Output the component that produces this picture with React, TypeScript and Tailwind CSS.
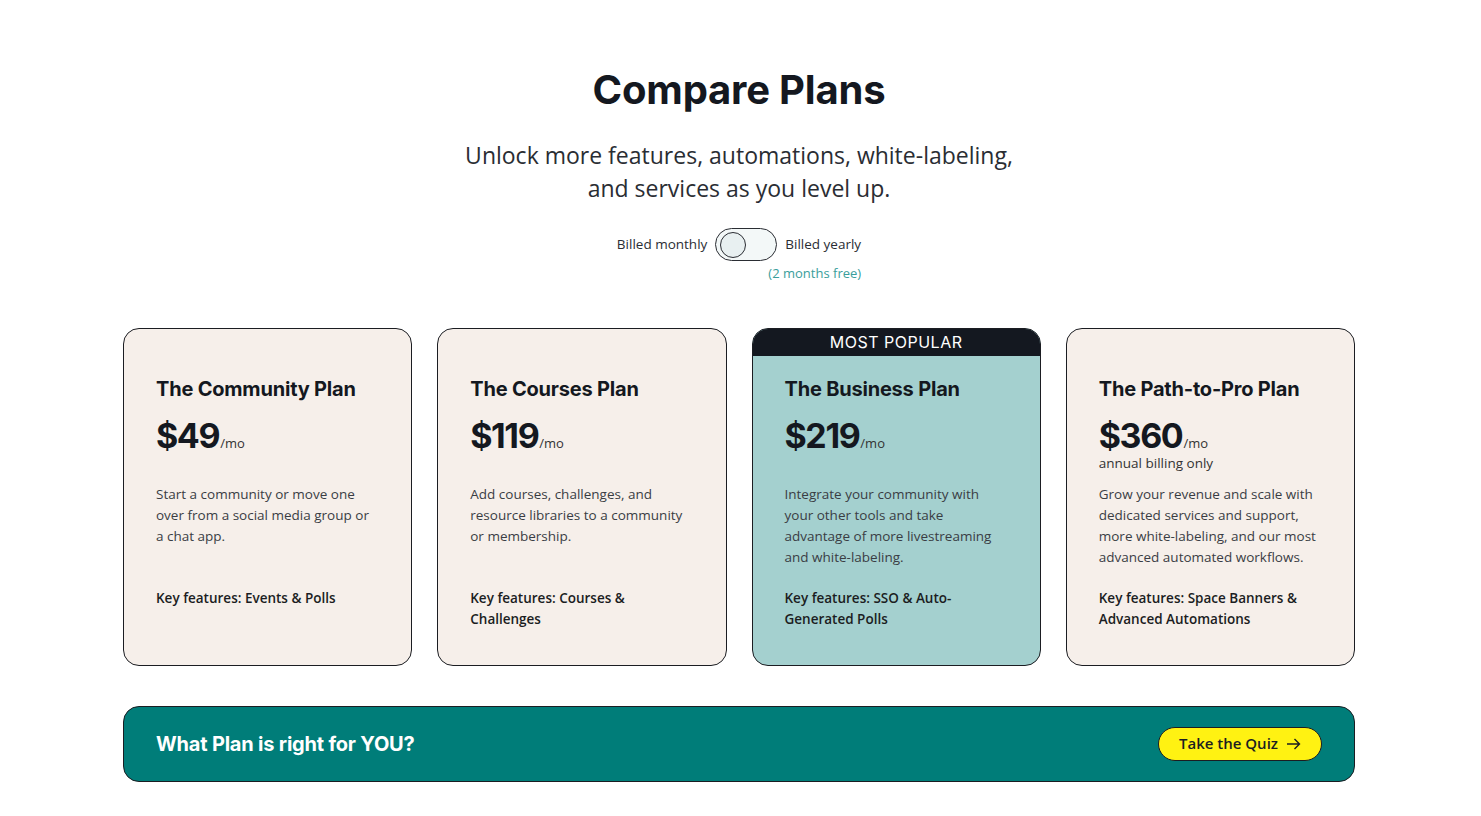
import React from "react";

const head = { fontFamily: "Inter, 'Noto Sans', sans-serif" };
const body = { fontFamily: "'Open Sans', 'Noto Sans', sans-serif" };

type Plan = {
  name: string;
  price: string;
  note?: string;
  desc: string[];
  key: string[];
  popular?: boolean;
};

const plans: Plan[] = [
  {
    name: "The Community Plan",
    price: "$49",
    desc: ["Start a community or move one", "over from a social media group or", "a chat app."],
    key: ["Key features: Events & Polls"],
  },
  {
    name: "The Courses Plan",
    price: "$119",
    desc: ["Add courses, challenges, and", "resource libraries to a community", "or membership."],
    key: ["Key features: Courses &", "Challenges"],
  },
  {
    name: "The Business Plan",
    price: "$219",
    desc: ["Integrate your community with", "your other tools and take", "advantage of more livestreaming", "and white-labeling."],
    key: ["Key features: SSO & Auto-", "Generated Polls"],
    popular: true,
  },
  {
    name: "The Path-to-Pro Plan",
    price: "$360",
    note: "annual billing only",
    desc: ["Grow your revenue and scale with", "dedicated services and support,", "more white-labeling, and our most", "advanced automated workflows."],
    key: ["Key features: Space Banners &", "Advanced Automations"],
  },
];

function Card({ p }: { p: Plan }) {
  return (
    <div
      className={`flex flex-col overflow-hidden rounded-[16px] border border-[#1b1d22] ${
        p.popular ? "bg-[#a4d0cf]" : "bg-[#f6efea]"
      }`}
    >
      {p.popular ? (
        <div
          className="flex h-[27px] items-center justify-center bg-[#141820] text-[16px] tracking-[0.5px] text-white"
          style={head}
        >
          <span className="font-normal">MOST POPULAR</span>
        </div>
      ) : null}
      <div className={`flex flex-col px-[32px] pb-[35px] ${p.popular ? "pt-[19px]" : "pt-[46px]"}`}>
        <div className="text-[20px] font-bold leading-[28px] tracking-[-0.2px] text-[#141820]" style={head}>
          {p.name}
        </div>
        <div className="mt-[15px] h-[66px]">
          <div className="flex items-baseline text-[#141820]">
            <span className="text-[34px] font-bold leading-[36px] tracking-[-1.4px]" style={head}>
              {p.price}
            </span>
            <span className="ml-[1px] text-[13px] leading-[18px] text-[#333]" style={body}>
              /mo
            </span>
          </div>
          {p.note ? (
            <div className="text-[13.5px] leading-[18px] text-[#333]" style={body}>
              {p.note}
            </div>
          ) : null}
        </div>
        <div className="h-[84px] text-[13.5px] leading-[21px] text-[#3a3d44]" style={body}>
          {p.desc.map((l, i) => (
            <div key={i} className="whitespace-nowrap">
              {l}
            </div>
          ))}
        </div>
        <div className="mt-[20px] text-[13.5px] font-semibold leading-[21px] text-[#1b1d22]" style={body}>
          {p.key.map((l, i) => (
            <div key={i} className="whitespace-nowrap">
              {l}
            </div>
          ))}
        </div>
      </div>
    </div>
  );
}

export default function App() {
  return (
    <div className="min-h-[816px] w-full bg-white">
      <div className="ml-[123px] flex w-[1232px] flex-col items-center pt-[65px]">
        <h1 className="text-[40px] font-bold leading-[50px] tracking-[-0.2px] text-[#141820]" style={head}>
          Compare Plans
        </h1>
        <p className="mt-[24px] text-center text-[23px] leading-[33px] text-[#2a2d33]" style={body}>
          Unlock more features, automations, white-labeling,
          <br />
          and services as you level up.
        </p>
        <div className="mt-[23px] flex flex-col items-end">
          <div className="flex items-center gap-[8px] text-[13.5px] text-[#2a2d33]" style={body}>
            <span>Billed monthly</span>
            <div className="flex h-[33px] w-[62px] items-center rounded-full border border-[#2a2d33] bg-[#f3f8f8] px-[4px]">
              <div className="h-[26px] w-[26px] rounded-full border border-[#2a2d33] bg-[#e8f0f1]" />
            </div>
            <span>Billed yearly</span>
          </div>
          <div className="mt-[3px] text-[13px] text-[#3a9e9b]" style={body}>
            (2 months free)
          </div>
        </div>

        <div className="mt-[44px] grid w-full grid-cols-4 gap-[25px]">
          {plans.map((p) => (
            <Card key={p.name} p={p} />
          ))}
        </div>

        <div className="mt-[40px] flex h-[76px] w-full items-center justify-between rounded-[16px] border border-[#1b1d22] bg-[#007d79] pl-[32px] pr-[32px]">
          <span className="text-[20px] font-bold tracking-[-0.2px] text-white" style={head}>
            What Plan is right for YOU?
          </span>
          <button
            className="flex h-[34px] items-center gap-[8px] rounded-full border border-[#1b1d22] bg-[#fff212] px-[20px] text-[15px] font-semibold text-[#1b1d22]"
            style={body}
          >
            Take the Quiz
            <svg width="15" height="12" viewBox="0 0 15 12" fill="none" stroke="#1b1d22" strokeWidth="1.4">
              <path d="M1 6h12.5M8.5 1l5 5-5 5" />
            </svg>
          </button>
        </div>
      </div>
    </div>
  );
}
